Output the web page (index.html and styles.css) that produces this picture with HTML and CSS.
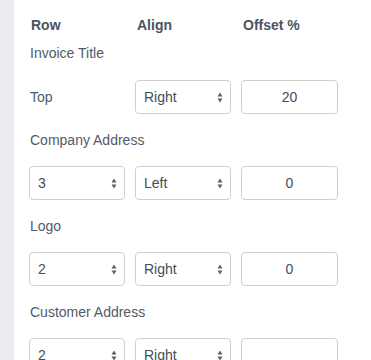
FILE: index.html
```html
<!DOCTYPE html>
<html lang="en">
<head>
    <meta charset="UTF-8">
    <meta name="viewport" content="width=device-width, initial-scale=1.0">
    <title>Layout Settings</title>
    <link rel="stylesheet" href="styles.css">
</head>
<body>
    <div class="container">
        <div class="sidebar"></div>
        <div class="main-content">
            <div class="row header-row">
                <div class="col">Row</div>
                <div class="col">Align</div>
                <div class="col">Offset %</div>
            </div>

            <div class="section-label first">Invoice Title</div>
            <div class="row">
                <div class="col row-text">Top</div>
                <div class="col select-wrap">
                    <select class="field">
                        <option>Left</option>
                        <option selected>Right</option>
                    </select>
                    <svg class="arrows" width="6" height="11" viewBox="0 0 6 11"><path d="M0.5 4.5 L3 0.5 L5.5 4.5 Z M0.5 6.5 L3 10.5 L5.5 6.5 Z" /></svg>
                </div>
                <div class="col"><input class="field number" type="text" value="20"></div>
            </div>

            <div class="section-label">Company Address</div>
            <div class="row">
                <div class="col select-wrap">
                    <select class="field">
                        <option>1</option>
                        <option>2</option>
                        <option selected>3</option>
                    </select>
                    <svg class="arrows" width="6" height="11" viewBox="0 0 6 11"><path d="M0.5 4.5 L3 0.5 L5.5 4.5 Z M0.5 6.5 L3 10.5 L5.5 6.5 Z" /></svg>
                </div>
                <div class="col select-wrap">
                    <select class="field">
                        <option selected>Left</option>
                        <option>Right</option>
                    </select>
                    <svg class="arrows" width="6" height="11" viewBox="0 0 6 11"><path d="M0.5 4.5 L3 0.5 L5.5 4.5 Z M0.5 6.5 L3 10.5 L5.5 6.5 Z" /></svg>
                </div>
                <div class="col"><input class="field number" type="text" value="0"></div>
            </div>

            <div class="section-label">Logo</div>
            <div class="row">
                <div class="col select-wrap">
                    <select class="field">
                        <option>1</option>
                        <option selected>2</option>
                        <option>3</option>
                    </select>
                    <svg class="arrows" width="6" height="11" viewBox="0 0 6 11"><path d="M0.5 4.5 L3 0.5 L5.5 4.5 Z M0.5 6.5 L3 10.5 L5.5 6.5 Z" /></svg>
                </div>
                <div class="col select-wrap">
                    <select class="field">
                        <option>Left</option>
                        <option selected>Right</option>
                    </select>
                    <svg class="arrows" width="6" height="11" viewBox="0 0 6 11"><path d="M0.5 4.5 L3 0.5 L5.5 4.5 Z M0.5 6.5 L3 10.5 L5.5 6.5 Z" /></svg>
                </div>
                <div class="col"><input class="field number" type="text" value="0"></div>
            </div>

            <div class="section-label">Customer Address</div>
            <div class="row">
                <div class="col select-wrap">
                    <select class="field">
                        <option>1</option>
                        <option selected>2</option>
                        <option>3</option>
                    </select>
                    <svg class="arrows" width="6" height="11" viewBox="0 0 6 11"><path d="M0.5 4.5 L3 0.5 L5.5 4.5 Z M0.5 6.5 L3 10.5 L5.5 6.5 Z" /></svg>
                </div>
                <div class="col select-wrap">
                    <select class="field">
                        <option>Left</option>
                        <option selected>Right</option>
                    </select>
                    <svg class="arrows" width="6" height="11" viewBox="0 0 6 11"><path d="M0.5 4.5 L3 0.5 L5.5 4.5 Z M0.5 6.5 L3 10.5 L5.5 6.5 Z" /></svg>
                </div>
                <div class="col"><input class="field number" type="text" value=""></div>
            </div>
        </div>
    </div>
</body>
</html>
```

FILE: styles.css
```css
body {
    font-family: 'Liberation Sans', Arial, sans-serif;
    font-size: 14px;
    margin: 0;
    padding: 0;
    background-color: #fff;
    color: #525a69;
}
.container {
    display: flex;
    min-height: 100vh;
}
.sidebar {
    width: 14px;
    flex-shrink: 0;
    background-color: #ebedf1;
}
.main-content {
    flex: 1;
    padding: 15px 0 0 15px;
}
.row {
    display: grid;
    grid-template-columns: 96px 96px 97px;
    column-gap: 10px;
    align-items: center;
}
.header-row {
    height: 20px;
    font-weight: bold;
    color: #4c5462;
}
.header-row .col {
    padding-left: 2px;
}
.section-label {
    height: 20px;
    line-height: 20px;
    margin: 16px 0 16px 1px;
}
.section-label.first {
    margin-top: 8px;
    margin-bottom: 17px;
}
.row-text {
    padding-left: 1px;
}
.select-wrap {
    position: relative;
}
.field {
    box-sizing: border-box;
    width: 100%;
    height: 34px;
    margin: 0;
    padding: 0 8px;
    border: 1px solid #cfcfcf;
    border-radius: 4px;
    background-color: #fff;
    font-family: inherit;
    font-size: 14px;
    color: #454c58;
    -webkit-appearance: none;
    appearance: none;
    outline: none;
}
.number {
    text-align: center;
}
.arrows {
    position: absolute;
    right: 8px;
    top: 12px;
    fill: #5a5f68;
    pointer-events: none;
}
```
